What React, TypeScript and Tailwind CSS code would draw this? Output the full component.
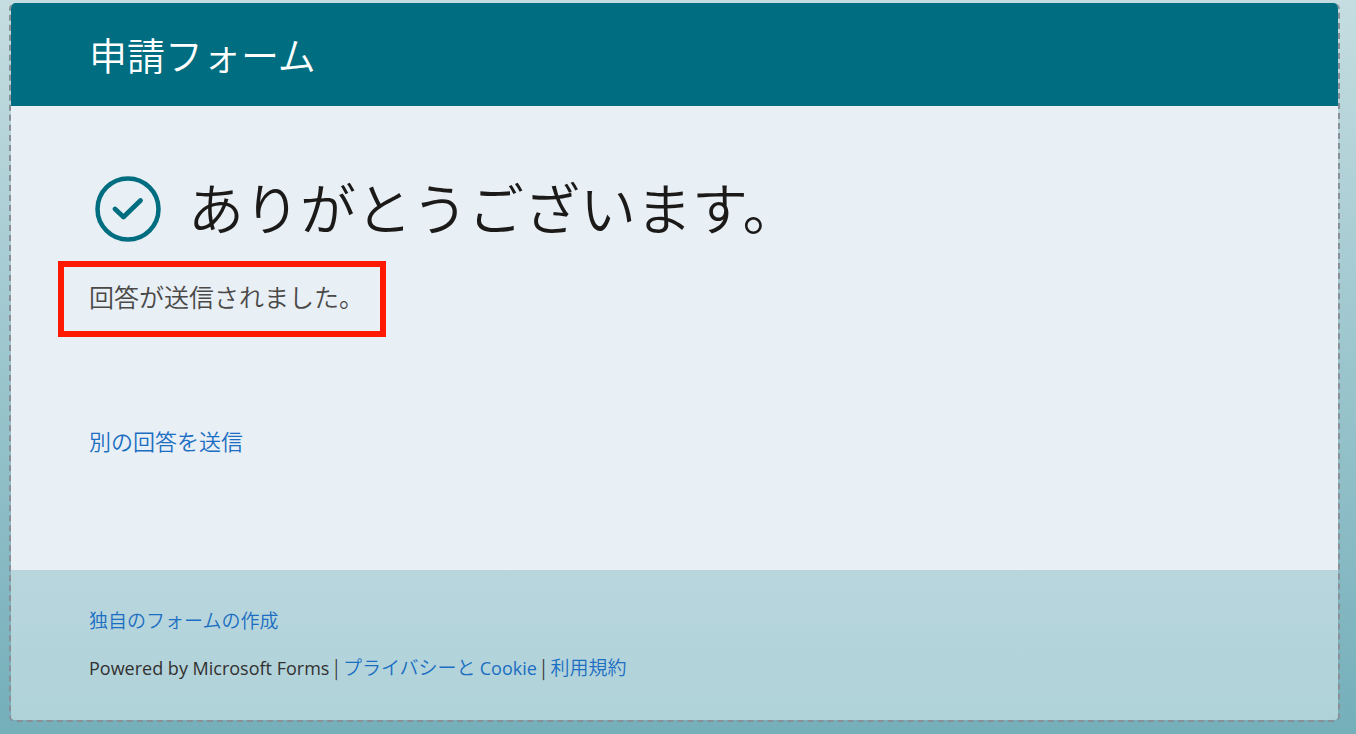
const linkStyle = "text-[#1b6ec2] hover:underline";

export default function App() {
  return (
    <div className="min-h-screen bg-linear-to-b from-[#c5dde1] via-[#9bc5cd] to-[#74afba] pt-[3px] pr-4 pb-[13px] pl-[9px] font-['Noto_Sans_CJK_JP',sans-serif]">
      <main className="overflow-hidden rounded-md border-x-2 border-b-2 border-dashed border-[#8a8f97]">
        <FormHeader title="申請フォーム" />
        <ThankYou />
        <FormFooter />
      </main>
    </div>
  );
}

function FormHeader({ title }: { title: string }) {
  return (
    <header className="bg-[#006d80] px-[78px] pt-[23px] pb-6">
      <h1 className="text-[38px] leading-14 font-[350] text-white">{title}</h1>
    </header>
  );
}

function ThankYou() {
  return (
    <section className="bg-[#e8eff5] pt-14 pb-[114px]">
      <div className="flex items-center gap-[26px] pl-[83px]">
        <CheckCircle />
        <h2 className="pb-1.5 text-[56px] leading-[88px] font-[350] text-[#1b1a19]">
          ありがとうございます。
        </h2>
      </div>

      <p className="mt-[5px] ml-[47px] w-fit border-6 border-[#ff1900] pt-[9px] pr-4 pb-[15px] pl-[25px] text-[25px] leading-10 font-[350] text-[#4a4948]">
        回答が送信されました。
      </p>

      <a
        href="#another"
        className={`mt-[87px] ml-[78px] block w-fit text-[22px] leading-8 font-[350] ${linkStyle}`}
      >
        別の回答を送信
      </a>
    </section>
  );
}

function FormFooter() {
  return (
    <footer className="bg-linear-to-b from-[#b9d6dd] to-[#afd2d9] px-[78px] pt-9 pb-[38px] text-[19px] leading-7 font-[350]">
      <a href="#create" className={`block w-fit ${linkStyle}`}>
        独自のフォームの作成
      </a>
      <p className="mt-[19px] text-[#323130]">
        <Latin>Powered by Microsoft Forms</Latin>
        {" | "}
        <a href="#privacy" className={linkStyle}>
          プライバシーと <Latin>Cookie</Latin>
        </a>
        {" | "}
        <a href="#terms" className={linkStyle}>
          利用規約
        </a>
      </p>
    </footer>
  );
}

function Latin({ children }: { children: React.ReactNode }) {
  return (
    <span className="font-['Open_Sans',sans-serif] text-[18px] font-normal">
      {children}
    </span>
  );
}

function CheckCircle() {
  return (
    <svg
      viewBox="0 0 68 68"
      className="size-[68px] shrink-0"
      fill="none"
      stroke="#006d80"
      aria-hidden="true"
    >
      <circle cx="34" cy="34" r="30.5" strokeWidth="4.5" />
      <path
        d="M21 34 L29.5 42 L46.5 25.5"
        strokeWidth="4.8"
        strokeLinecap="round"
        strokeLinejoin="round"
      />
    </svg>
  );
}
